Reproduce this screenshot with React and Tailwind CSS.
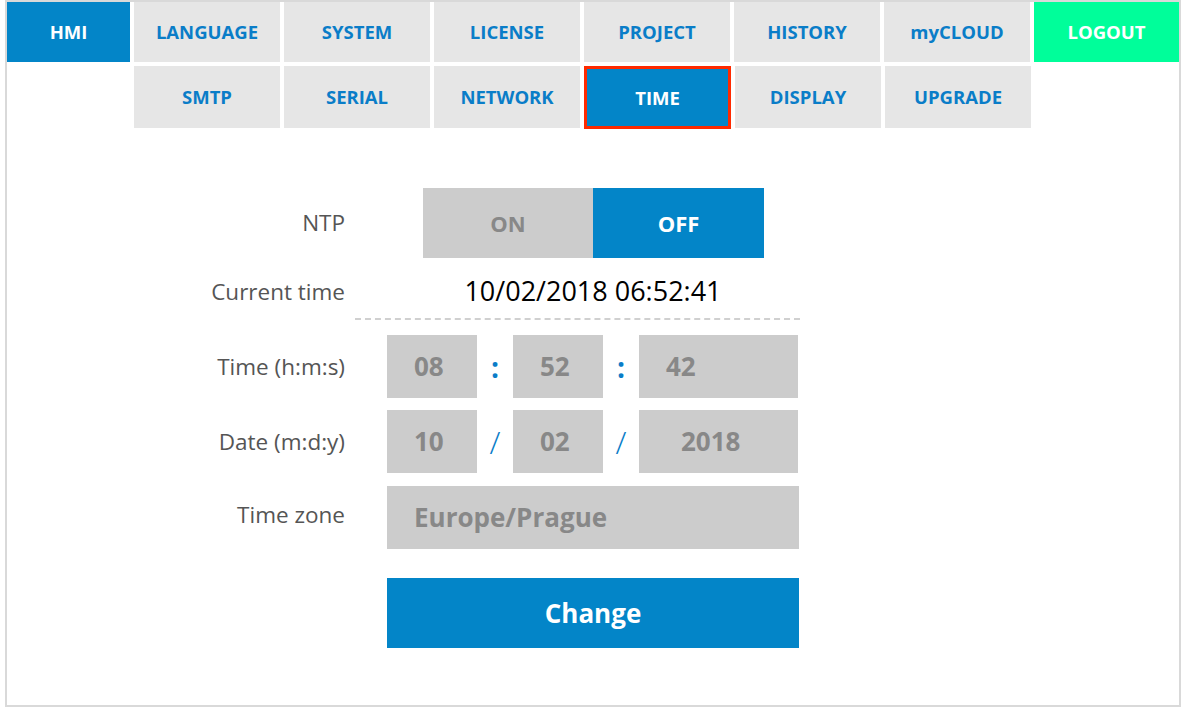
const topTabs = ["LANGUAGE", "SYSTEM", "LICENSE", "PROJECT", "HISTORY", "myCLOUD"];
const subTabs = ["SMTP", "SERIAL", "NETWORK", "TIME", "DISPLAY", "UPGRADE"];

const font = { fontFamily: "'Open Sans', 'Noto Sans', sans-serif" };

const Tab = ({ label, active }) => (
  <div
    className={
      active
        ? "flex h-[63px] w-[147px] items-center justify-center border-[3px] border-[#ff2a00] bg-[#0385c8] text-[18.5px] font-bold text-white"
        : "flex h-[62px] w-[146px] items-center justify-center bg-[#e6e6e6] text-[18.5px] font-bold text-[#0a7dc8]"
    }
  >
    {label}
  </div>
);

const Row = ({ label, children, className = "", labelClass = "" }) => (
  <div className={`flex items-center ${className}`}>
    <div className={`w-[338px] text-right text-[22.5px] text-[#555] ${labelClass}`}>{label}</div>
    {children}
  </div>
);

const Box = ({ value, w, pl = "pl-[27px]" }) => (
  <div className={`flex h-[63px] items-center bg-[#cccccc] text-[26px] font-bold text-[#888] ${w} ${pl}`}>
    {value}
  </div>
);

const Sep = ({ ch, slash }) => (
  <div
    className={`flex w-[36px] items-center justify-center text-[#0a7dc8] ${
      slash ? "text-[32px] font-light" : "text-[28px] font-bold"
    }`}
  >
    {ch}
  </div>
);

export default function App() {
  return (
    <div className="bg-white" style={font}>
      <div className="ml-[5px] h-[707px] w-[1176px] border-2 border-[#d9d9d9] bg-white">
        <div className="flex gap-[4px]">
          <div className="flex h-[60px] w-[123px] items-center justify-center bg-[#0385c8] text-[18.5px] font-bold text-white">
            HMI
          </div>
          {topTabs.map((t) => (
            <div
              key={t}
              className="flex h-[60px] w-[146px] items-center justify-center bg-[#e6e6e6] text-[18.5px] font-bold text-[#0a7dc8]"
            >
              {t}
            </div>
          ))}
          <div className="flex h-[60px] flex-1 items-center justify-center bg-[#00fe9a] text-[18.5px] font-bold text-white">
            LOGOUT
          </div>
        </div>
        <div className="mt-[4px] flex gap-[4px] pl-[127px]">
          {subTabs.map((t) => (
            <Tab key={t} label={t} active={t === "TIME"} />
          ))}
        </div>

        <div className="mt-[59px] flex flex-col">
          <Row label="NTP">
            <div className="ml-[78px] flex h-[70px]">
              <div className="flex w-[170px] items-center justify-center bg-[#cccccc] text-[22px] font-bold text-[#888]">
                ON
              </div>
              <div className="flex w-[171px] items-center justify-center bg-[#0385c8] text-[22px] font-bold text-white">
                OFF
              </div>
            </div>
          </Row>
          <Row label="Current time" className="h-[60px] pt-[7px]">
            <div className="ml-[42px] w-[412px] text-center text-[27px] text-black">10/02/2018 06:52:41</div>
          </Row>
          <div className="ml-[348px] w-[445px] border-t-2 border-dashed border-[#d0d0d0]" />
          <Row label="Time (h:m:s)" className="mt-[15px]">
            <div className="ml-[42px] flex">
              <Box value="08" w="w-[90px]" />
              <Sep ch=":" />
              <Box value="52" w="w-[90px]" />
              <Sep ch=":" />
              <Box value="42" w="w-[159px]" />
            </div>
          </Row>
          <Row label="Date (m:d:y)" className="mt-[12px]">
            <div className="ml-[42px] flex">
              <Box value="10" w="w-[90px]" />
              <Sep ch="/" slash />
              <Box value="02" w="w-[90px]" />
              <Sep ch="/" slash />
              <Box value="2018" w="w-[159px]" pl="pl-[42px]" />
            </div>
          </Row>
          <Row label="Time zone" className="mt-[13px]" labelClass="pb-[6px]">
            <div className="ml-[42px] flex">
              <Box value="Europe/Prague" w="w-[412px]" />
            </div>
          </Row>
          <div className="ml-[380px] mt-[29px] flex h-[70px] w-[412px] items-center justify-center bg-[#0385c8] text-[26px] font-bold text-white">
            Change
          </div>
        </div>
      </div>
    </div>
  );
}
